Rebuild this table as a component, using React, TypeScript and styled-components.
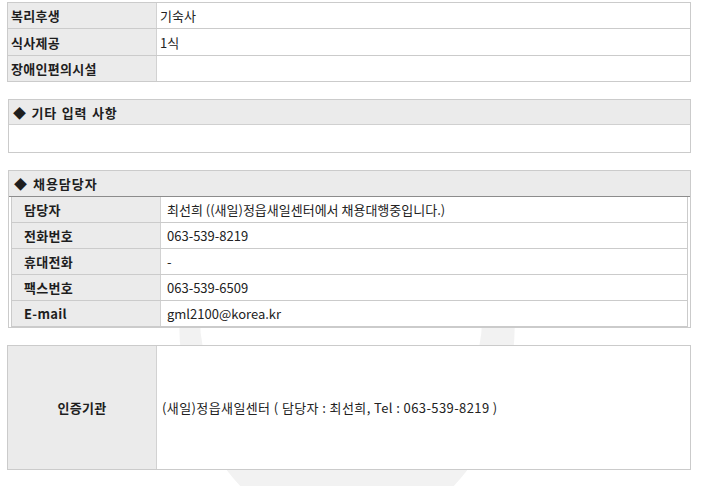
import React from "react";
import styled, { createGlobalStyle } from "styled-components";

const GlobalStyle = createGlobalStyle`
  html, body { margin: 0; padding: 0; background: #fff; }
  body { font-family: "Noto Sans CJK KR", "Noto Sans", sans-serif; color: #222; }
  * { box-sizing: border-box; }
`;

const Page = styled.div`
  position: relative;
  width: 701px;
  height: 486px;
  overflow: hidden;
  padding: 2px 0 0 7px;
`;

const Watermark = styled.svg`
  position: absolute;
  left: 0;
  top: 0;
  z-index: 0;
  pointer-events: none;
`;

const Content = styled.div`
  position: relative;
  z-index: 1;
  width: 684px;
  display: flex;
  flex-direction: column;
  gap: 17px;
`;

const Table = styled.div<{ $inset?: boolean }>`
  display: flex;
  flex-direction: column;
  background: #fff;
  border: 1px solid #cbcbcb;
  border-bottom: none;
  ${(p) => (p.$inset ? "margin: 0 2px; border-top: none;" : "")}
`;

const Row = styled.div<{ $h?: number }>`
  display: grid;
  grid-template-columns: 149px 1fr;
  height: ${(p) => p.$h ?? 26}px;
  border-bottom: 1px solid #cbcbcb;
`;

const Label = styled.div<{ $pad?: number; $center?: boolean }>`
  display: flex;
  align-items: center;
  justify-content: ${(p) => (p.$center ? "center" : "flex-start")};
  padding-left: ${(p) => p.$pad ?? 3}px;
  background: #ebebeb;
  border-right: 1px solid #d2d2d2;
  font-size: 13px;
  font-weight: 700;
  line-height: 1;
  color: #1e1e1e;
  letter-spacing: 0.3px;
`;

const Value = styled.div<{ $pad?: number; $spacing?: number }>`
  display: flex;
  align-items: center;
  padding-left: ${(p) => p.$pad ?? 3}px;
  font-size: 13px;
  line-height: 1;
  color: #222;
  letter-spacing: ${(p) => p.$spacing ?? 0}px;
  white-space: pre;
`;

const Section = styled.div`
  display: flex;
  flex-direction: column;
  background: #fff;
  border: 1px solid #cbcbcb;
  margin-left: 1px;
`;

const SectionHeader = styled.div<{ $dark?: boolean }>`
  height: ${(p) => (p.$dark ? 26 : 25)}px;
  display: flex;
  align-items: center;
  padding-left: ${(p) => (p.$dark ? 5 : 4)}px;
  background: #ebebeb;
  border-bottom: 1px solid ${(p) => (p.$dark ? "#8c8c8c" : "#d0d0d0")};
  font-size: 13px;
  font-weight: 700;
  line-height: 1;
  color: #1e1e1e;
  letter-spacing: ${(p) => (p.$dark ? 1 : 0.8)}px;
  word-spacing: 1px;
`;

const SectionBody = styled.div<{ $h?: number }>`
  height: ${(p) => p.$h ?? 27}px;
`;

const welfare: [string, string, number][] = [
  ["복리후생", "기숙사", 26],
  ["식사제공", "1식", 27],
  ["장애인편의시설", "", 26],
];

const contacts: [string, string, number][] = [
  ["담당자", "최선희 ((새일)정읍새일센터에서 채용대행중입니다.)", 26],
  ["전화번호", "063-539-8219", 26],
  ["휴대전화", "-", 26],
  ["팩스번호", "063-539-6509", 26],
  ["E-mail", "gml2100@korea.kr", 26],
];

export default function App() {
  return (
    <>
      <GlobalStyle />
      <Page>
        <Watermark width="701" height="486" viewBox="0 0 701 486">
          <path
            d="M 179 320 A 168 215 0 0 0 515 320 L 482 320 A 141 135 0 0 1 200 320 Z"
            fill="#f2f2f2"
          />
        </Watermark>
        <Content>
          <Table>
            {welfare.map(([l, v, h]) => (
              <Row key={l} $h={h}>
                <Label>{l}</Label>
                <Value>{v}</Value>
              </Row>
            ))}
          </Table>

          <Section>
            <SectionHeader>◆ 기타 입력 사항</SectionHeader>
            <SectionBody $h={27} />
          </Section>

          <Section>
            <SectionHeader $dark>◆ 채용담당자</SectionHeader>
            <Table $inset>
              {contacts.map(([l, v, h]) => (
                <Row key={l} $h={h}>
                  <Label $pad={12}>{l}</Label>
                  <Value $pad={6}>{v}</Value>
                </Row>
              ))}
            </Table>
          </Section>

          <Table>
            <Row $h={124}>
              <Label $center $pad={0}>인증기관</Label>
              <Value $pad={5} $spacing={0.4}>
                (새일)정읍새일센터 ( 담당자 : 최선희, Tel : 063-539-8219 )
              </Value>
            </Row>
          </Table>
        </Content>
      </Page>
    </>
  );
}
